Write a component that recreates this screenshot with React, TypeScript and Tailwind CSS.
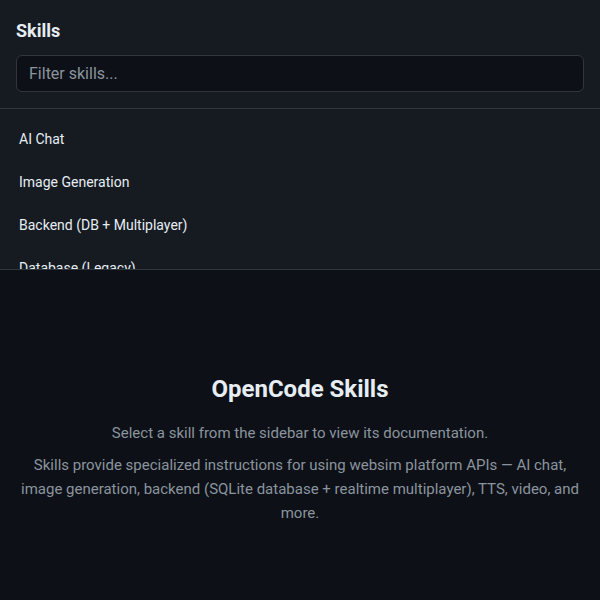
import React from "react";

const skills = [
	"AI Chat",
	"Image Generation",
	"Backend (DB + Multiplayer)",
	"Database (Legacy)",
	"Realtime Multiplayer",
	"Text to Speech",
	"Video Generation",
];

export default function App() {
	return (
		<div
			className="flex h-[600px] w-[600px] flex-col overflow-hidden bg-[#0d1117] text-[#e6edf3]"
			style={{ fontFamily: "Roboto, 'Noto Sans', sans-serif" }}
		>
			{/* sidebar, stacked on top for narrow screens */}
			<aside className="flex h-[270px] shrink-0 flex-col border-b border-[#30363d] bg-[#161b22]">
				<div className="border-b border-[#30363d] px-4 pt-[18px] pb-4">
					<h2 className="mb-[11px] text-[18px] font-bold leading-[26px]">Skills</h2>
					<input
						type="text"
						placeholder="Filter skills..."
						className="h-[37px] w-full rounded-md border border-[#30363d] bg-[#0d1117] px-3 text-[16px] text-[#e6edf3] placeholder:text-[#8b949e] outline-none"
					/>
				</div>
				<ul className="flex-1 overflow-hidden px-2 pt-[9px]">
					{skills.map((skill) => (
						<li
							key={skill}
							className="flex h-[43px] shrink-0 items-center rounded-md px-[11px] text-[14px] text-[#e6edf3]"
						>
							{skill}
						</li>
					))}
				</ul>
			</aside>
			<main className="flex flex-1 flex-col items-center justify-center px-5 pt-7 text-center">
				<h1 className="mb-4 text-[24px] font-bold leading-[32px]">OpenCode Skills</h1>
				<p className="mb-2 text-[15px] leading-[24px] text-[#8b949e]">
					Select a skill from the sidebar to view its documentation.
				</p>
				<p className="text-[15px] leading-[24px] text-[#8b949e]">
					Skills provide specialized instructions for using websim platform APIs — AI chat,
					image generation, backend (SQLite database + realtime multiplayer), TTS, video, and
					more.
				</p>
			</main>
		</div>
	);
}
